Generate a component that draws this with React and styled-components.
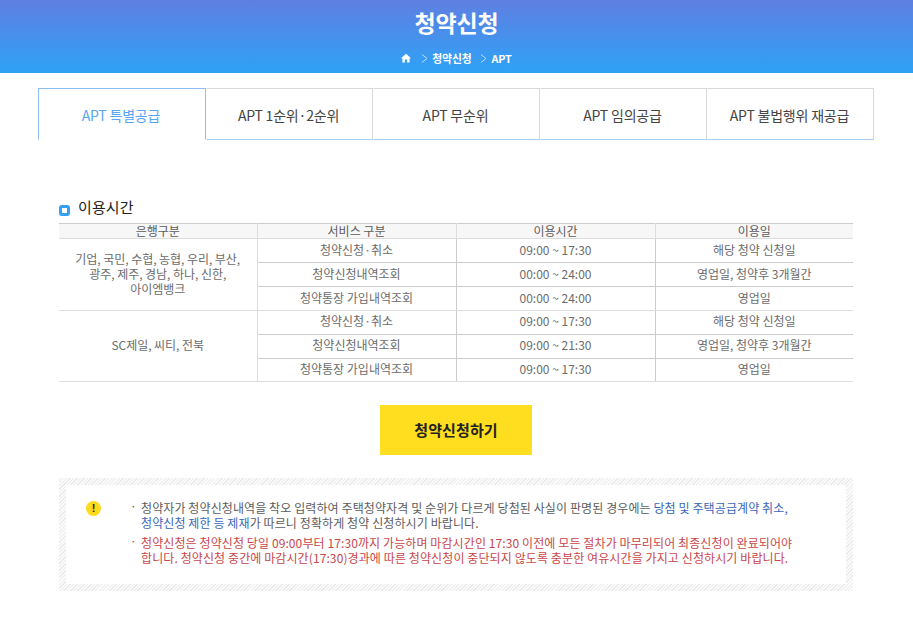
import React from 'react';
import styled, { createGlobalStyle } from 'styled-components';

const Global = createGlobalStyle`
  html, body { margin: 0; padding: 0; background: #fff; }
  body { font-family: "Noto Sans CJK KR", "Noto Sans", sans-serif; color: #555; }
  * { box-sizing: border-box; }
`;
const Page = styled.div`width: 913px; height: 621px; overflow: hidden;`;
const Header = styled.header`
  height: 73px;
  background: linear-gradient(180deg, #5f7fe2 0%, #2ea2f6 100%);
  display: flex; flex-direction: column; align-items: center; color: #fff;
`;
const Title = styled.h1`
  margin: 6px 0 0; font-size: 23px; line-height: 32px; font-weight: 700; letter-spacing: -0.2px;
`;
const Crumbs = styled.nav`
  margin-top: 12px; display: flex; align-items: center; height: 16px;
  font-size: 10.8px; font-weight: 700; letter-spacing: -0.15px;
`;
const Sep = styled.svg`width: 7px; height: 9px; margin: 0 4px 0 ${p => p.$ml}px;`;
const Tabs = styled.ul`
  list-style: none; margin: 15px 0 0 38px; padding: 0; width: 836px; height: 52px; display: flex;
`;
const Tab = styled.li`
  flex: 0 0 ${p => p.$w}px; height: 52px; display: flex; align-items: center; justify-content: center;
  font-size: 14px; letter-spacing: -0.2px; padding: 1px 2px 0 0;
  background: #fff;
  color: ${p => p.$active ? '#58a6f2' : '#444'};
  border-top: 1px solid ${p => p.$active ? '#8dbdf3' : '#d9d9d9'};
  border-left: 1px solid ${p => p.$active ? '#8dbdf3' : 'transparent'};
  border-right: 1px solid ${p => p.$active ? '#8dbdf3' : '#d9d9d9'};
  border-bottom: 1px solid ${p => p.$active ? '#fff' : '#a9cdf5'};
`;
const Section = styled.section`margin: 55px 60px 0 59px; width: 794px;`;
const HeadRow = styled.div`display: flex; align-items: center; height: 24px;`;
const Bullet = styled.span`
  width: 11px; height: 11px; border: 3px solid #32a0f5; border-radius: 3px; background: #fff;
  margin: 7px 8px 0 0;
`;
const SectionTitle = styled.h2`margin: 0; font-size: 15px; letter-spacing: 0.1px; font-weight: 400; color: #222; line-height: 24px;`;
const Table = styled.table`
  width: 794px; table-layout: fixed; border-collapse: collapse; margin-top: 4px;
  font-size: 12px; color: #6b6b6b; letter-spacing: 0; text-align: center;
  border-top: 1px solid #ccc;
`;
const Th = styled.th`
  height: 15px; padding: 0; font-weight: 400; line-height: 14px; background: #f7f7f7; color: #5c5c5c;
  border-bottom: 1px solid #ddd; border-left: 1px solid #ddd;
  &:first-child { border-left: 0; }
`;
const Td = styled.td`
  height: ${p => p.$h}px; padding: 0 0 ${p => p.$pb}px; line-height: 15px;
  border-bottom: 1px solid ${p => p.$strong ? '#ddd' : '#ccc'}; border-left: 1px solid #ccc;
  &:first-child { border-left: 0; }
`;
const BankCell = styled(Td)`
  border-right: 1px solid #ddd; line-height: 15px; padding: 0 14px 3px; letter-spacing: -0.05px;
`;
const Submit = styled.button`
  display: block; margin: 23px auto 0; width: 152px; height: 50px; border: 0; background: #ffdd1f;
  font: 700 15px "Noto Sans CJK KR", sans-serif; color: #222; letter-spacing: 0.1px; padding: 0 0 1px;
`;
const Notice = styled.aside`
  margin: 23px 0 0; height: 113px; padding: 7px;
  background: repeating-linear-gradient(135deg, #ebebeb 0 1px, #fbfbfb 1px 2.5px);
`;
const NoticeInner = styled.div`
  height: 99px; background: #fff; display: flex; padding: 15px 0 0 20px;
`;
const Alert = styled.span`
  flex: none; width: 15px; height: 15px; margin-top: 1px; border-radius: 50%; background: #ffd91a; color: #222;
  font: 700 11px/15px "Liberation Sans", sans-serif; text-align: center;
`;
const Items = styled.ul`
  list-style: none; margin: 0 0 0 32px; padding: 0; font-size: 12px; line-height: 15px; letter-spacing: 0.1px; width: 690px;
`;
const Item = styled.li`
  position: relative; padding-left: 8px; margin-bottom: 5px; color: ${p => p.$red ? '#c9474a' : '#5c5c5c'};
  &::before { content: "·"; position: absolute; left: -3px; top: -2px; }
`;
const Blue = styled.span`color: #3a66b8;`;

const rows = [
  ['청약신청·취소', '09:00 ~ 17:30', '해당 청약 신청일'],
  ['청약신청내역조회', '00:00 ~ 24:00', '영업일, 청약후 3개월간'],
  ['청약통장 가입내역조회', '00:00 ~ 24:00', '영업일'],
  ['청약신청·취소', '09:00 ~ 17:30', '해당 청약 신청일'],
  ['청약신청내역조회', '09:00 ~ 21:30', '영업일, 청약후 3개월간'],
  ['청약통장 가입내역조회', '09:00 ~ 17:30', '영업일'],
];
const tabs = [['APT 특별공급', 168], ['APT 1순위·2순위', 167], ['APT 무순위', 167], ['APT 임의공급', 167], ['APT 불법행위 재공급', 167]];

export default function App() {
  return (
    <Page>
      <Global />
      <Header>
        <Title>청약신청</Title>
        <Crumbs>
          <svg width="10" height="10" viewBox="0 0 10 10"><path d="M5 .8 0 5.3h1.4V9.4h2.5V6.4h2.2v3h2.5V5.3H10z" fill="#fff" /></svg>
          <Sep $ml={10} viewBox="0 0 7 9"><path d="M1 .5 6 4.5 1 8.5" fill="none" stroke="#b9dcfb" strokeWidth="1" /></Sep>
          <span>청약신청</span>
          <Sep $ml={9} viewBox="0 0 7 9"><path d="M1 .5 6 4.5 1 8.5" fill="none" stroke="#b9dcfb" strokeWidth="1" /></Sep>
          <span>APT</span>
        </Crumbs>
      </Header>
      <Tabs>
        {tabs.map(([t, w], i) => <Tab key={t} $w={w} $active={i === 0}>{t}</Tab>)}
      </Tabs>
      <Section>
        <HeadRow><Bullet /><SectionTitle>이용시간</SectionTitle></HeadRow>
        <Table>
          <colgroup><col width="198" /><col width="199" /><col width="199" /><col width="198" /></colgroup>
          <thead><tr><Th>은행구분</Th><Th>서비스 구분</Th><Th>이용시간</Th><Th>이용일</Th></tr></thead>
          <tbody>
            {rows.map((r, i) => (
              <tr key={i}>
                {i === 0 && <BankCell rowSpan={3} $h={72} $strong>기업, 국민, 수협, 농협, 우리, 부산,<br />광주, 제주, 경남, 하나, 신한,<br />아이엠뱅크</BankCell>}
                {i === 3 && <BankCell rowSpan={3} $h={71} $strong>SC제일, 씨티, 전북</BankCell>}
                {r.map((c, j) => <Td key={j} $h={i === 5 ? 23 : 24} $pb={i === 3 || i === 4 ? 4 : i === 5 ? 3 : 2} $strong={i === 2 || i === 5}>{c}</Td>)}
              </tr>
            ))}
          </tbody>
        </Table>
        <Submit>청약신청하기</Submit>
        <Notice>
          <NoticeInner>
            <Alert>!</Alert>
            <Items>
              <Item>청약자가 청약신청내역을 착오 입력하여 주택청약자격 및 순위가 다르게 당첨된 사실이 판명된 경우에는 <Blue>당첨 및 주택공급계약 취소,<br />청약신청 제한 등 제재</Blue>가 따르니 정확하게 청약 신청하시기 바랍니다.</Item>
              <Item $red>청약신청은 청약신청 당일 09:00부터 17:30까지 가능하며 마감시간인 17:30 이전에 모든 절차가 마무리되어 최종신청이 완료되어야<br />합니다. 청약신청 중간에 마감시간(17:30)경과에 따른 청약신청이 중단되지 않도록 충분한 여유시간을 가지고 신청하시기 바랍니다.</Item>
            </Items>
          </NoticeInner>
        </Notice>
      </Section>
    </Page>
  );
}
